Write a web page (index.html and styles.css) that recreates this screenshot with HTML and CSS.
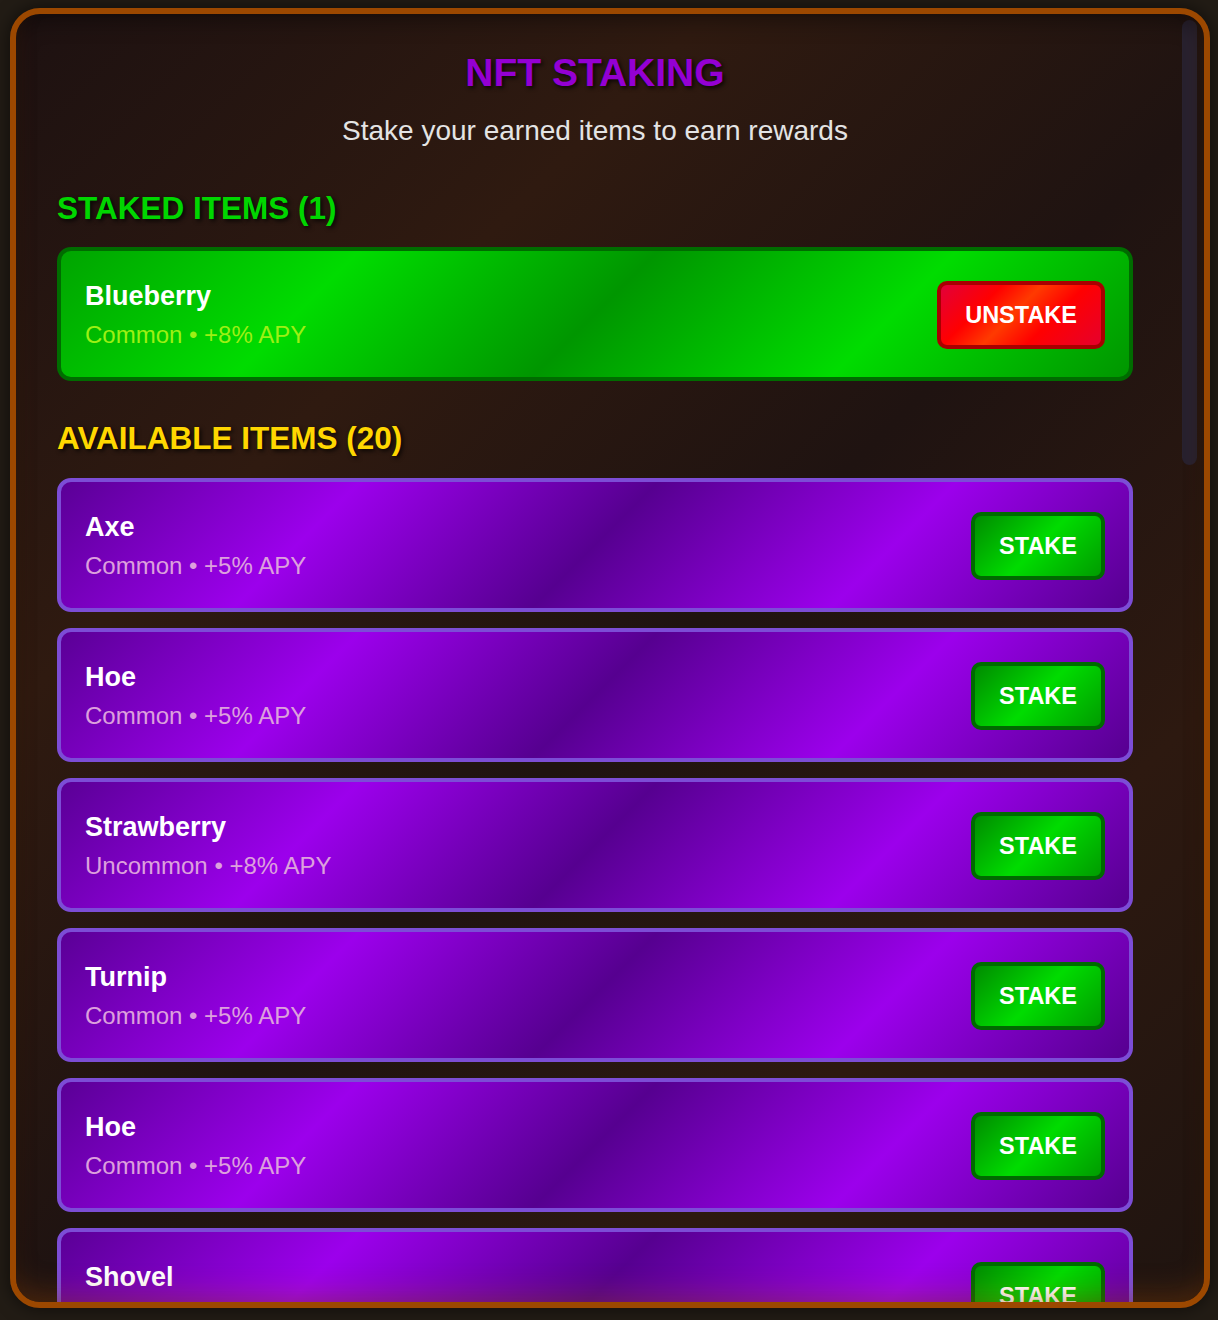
FILE: index.html
```html
<!DOCTYPE html>
<html lang="en">
<head>
    <meta charset="UTF-8">
    <meta name="viewport" content="width=device-width, initial-scale=1.0">
    <title>NFT Staking</title>
    <link rel="stylesheet" href="styles.css">
</head>
<body>
    <div class="modal">
        <div class="modal-body">
            <h1 class="title">NFT STAKING</h1>
            <p class="subtitle">Stake your earned items to earn rewards</p>

            <h2 class="section-title staked-title">STAKED ITEMS (1)</h2>
            <div class="item-list">
                <div class="item-card staked-card">
                    <div class="item-info">
                        <div class="item-name">Blueberry</div>
                        <div class="item-meta">Common &bull; +8% APY</div>
                    </div>
                    <button class="btn btn-unstake">UNSTAKE</button>
                </div>
            </div>

            <h2 class="section-title available-title">AVAILABLE ITEMS (20)</h2>
            <div class="item-list" id="availableList"></div>
        </div>
        <div class="scroll-thumb"></div>
    </div>

    <script>
        const items = [
            ['Axe', 'Common', 5], ['Hoe', 'Common', 5], ['Strawberry', 'Uncommon', 8],
            ['Turnip', 'Common', 5], ['Hoe', 'Common', 5], ['Shovel', 'Common', 5],
            ['Carrot', 'Common', 5], ['Wheat', 'Common', 5], ['Pumpkin', 'Uncommon', 8],
            ['Watering Can', 'Common', 5], ['Potato', 'Common', 5], ['Corn', 'Common', 5],
            ['Sunflower', 'Uncommon', 8], ['Pickaxe', 'Common', 5], ['Tomato', 'Common', 5],
            ['Axe', 'Common', 5], ['Turnip', 'Common', 5], ['Golden Hoe', 'Rare', 12],
            ['Strawberry', 'Uncommon', 8], ['Shovel', 'Common', 5]
        ];

        const list = document.getElementById('availableList');
        list.innerHTML = items.map(([name, rarity, apy]) => `
                <div class="item-card">
                    <div class="item-info">
                        <div class="item-name">${name}</div>
                        <div class="item-meta">${rarity} &bull; +${apy}% APY</div>
                    </div>
                    <button class="btn btn-stake">STAKE</button>
                </div>`).join('');
    </script>
</body>
</html>
```

FILE: styles.css
```css
html, body {
    margin: 0;
    height: 100%;
}
body {
    font-family: "Liberation Sans", Arial, sans-serif;
    background: #221c15;
    padding: 8px 8px 0 10px;
    box-sizing: border-box;
    overflow: hidden;
}
.modal {
    position: relative;
    width: 1200px;
    height: 1300px;
    box-sizing: border-box;
    border: 6px solid #9c4800;
    border-radius: 30px;
    overflow: hidden;
    background: linear-gradient(135deg, #1d1111 0%, #2f1a10 28%, #1f1311 52%, #2d1910 76%, #1f1410 100%);
    box-shadow: 0 0 18px rgba(0,0,0,0.6);
}
.modal::after {
    content: "";
    position: absolute;
    inset: 0;
    border-radius: 24px;
    pointer-events: none;
    box-shadow: inset 0 -18px 30px -12px rgba(170,80,10,0.35),
                inset 0 8px 20px rgba(0,0,0,0.35);
}
.modal-body {
    height: 100%;
    box-sizing: border-box;
    padding: 37px 71px 220px 41px;
    overflow-y: auto;
    scrollbar-width: none;
}
.scroll-thumb {
    position: absolute;
    top: 6px;
    right: 7px;
    width: 15px;
    height: 445px;
    border-radius: 8px;
    background: #29222f;
}
.title {
    margin: 0;
    text-align: center;
    font-size: 39px;
    font-weight: bold;
    color: #9400d3;
    text-shadow: 2px 2px 4px rgba(0,0,0,0.8);
}
.subtitle {
    margin: 20px 0 0;
    text-align: center;
    font-size: 28px;
    color: #e4e4e4;
}
.section-title {
    margin: 43px 0 20px;
    font-size: 31.5px;
    font-weight: bold;
    text-shadow: 2px 2px 4px rgba(0,0,0,0.8);
}
.staked-title {
    color: #00d600;
}
.available-title {
    margin: 39px 0 21px;
    color: #ffd700;
}
.item-list {
    display: flex;
    flex-direction: column;
    gap: 16px;
}
.item-card {
    display: flex;
    align-items: center;
    justify-content: space-between;
    padding: 29px 24px 28px;
    border: 4px solid #7c4dd6;
    border-radius: 14px;
    background: linear-gradient(135deg, #5a0096 0%, #9c00ec 25%, #560090 50%, #9c00ec 75%, #560090 100%);
}
.staked-card {
    border-color: #006c00;
    background: linear-gradient(135deg, #00a400 0%, #00dc00 25%, #009600 50%, #00dc00 75%, #009600 100%);
}
.item-name {
    font-size: 27px;
    line-height: 32px;
    font-weight: bold;
    color: #fff;
    margin-bottom: 9px;
}
.item-meta {
    font-size: 24px;
    line-height: 28px;
    color: #dda0dd;
}
.staked-card .item-meta {
    color: #9cf014;
}
.btn {
    font-family: inherit;
    font-size: 23.5px;
    line-height: 28px;
    font-weight: bold;
    color: #fff;
    padding: 16px 24px;
    border-radius: 10px;
    cursor: pointer;
}
.btn-stake {
    border: 4px solid #006a00;
    background: linear-gradient(135deg, #008c00 0%, #00dc00 50%, #009c00 100%);
}
.btn-unstake {
    border: 4px solid #a80000;
    background: linear-gradient(135deg, #e2003a 0%, #ff0000 28%, #ff3a00 46%, #ff0000 66%, #e6002c 100%);
}
```
